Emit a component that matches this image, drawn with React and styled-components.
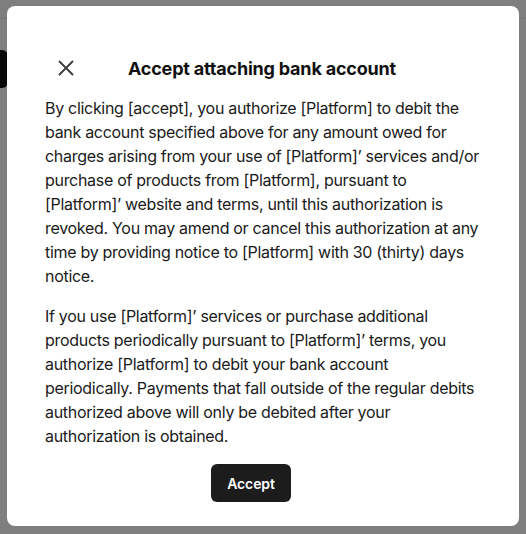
import React from "react";
import styled, { createGlobalStyle } from "styled-components";

const Global = createGlobalStyle`
  html, body { margin: 0; padding: 0; }
  body {
    font-family: Inter, "Noto Sans", sans-serif;
    background: #ffffff;
    width: 526px;
    height: 534px;
    overflow: hidden;
  }
`;

const Page = styled.div`
  position: relative;
  width: 526px;
  height: 534px;
  background: #ffffff;
  overflow: hidden;
`;

const TopBar = styled.div`
  height: 18px;
  border-bottom: 1px solid #efefef;
  background: #ffffff;
`;

const PageButton = styled.div`
  margin-top: 31px;
  margin-left: -30px;
  width: 38px;
  height: 38px;
  border-radius: 6px;
  background: #111111;
`;

const Overlay = styled.div`
  position: absolute;
  inset: 0;
  background: rgba(0, 0, 0, 0.5);
  display: flex;
  align-items: flex-start;
  justify-content: center;
  padding-top: 6px;
`;

const Dialog = styled.div`
  box-sizing: border-box;
  width: 512px;
  height: 520px;
  background: #ffffff;
  border-radius: 8px;
  padding: 46px 40px 24px 38px;
  display: flex;
  flex-direction: column;
`;

const Header = styled.div`
  display: grid;
  grid-template-columns: 1fr auto 1fr;
  align-items: center;
  height: 32px;
  margin-bottom: 12px;
`;

const CloseButton = styled.button`
  justify-self: start;
  margin-left: 7px;
  width: 28px;
  height: 28px;
  padding: 0;
  border: none;
  background: transparent;
  display: flex;
  align-items: center;
  justify-content: center;
  cursor: pointer;
`;

const Title = styled.h2`
  margin: 0;
  font-family: Inter, "Noto Sans", sans-serif;
  font-size: 18px;
  font-weight: 700;
  color: #111111;
  letter-spacing: -0.2px;
`;

const Body = styled.p`
  margin: 0 0 ${(p) => p.$gap}px;
  font-family: Inter, "Noto Sans", sans-serif;
  font-size: 16px;
  line-height: 24px;
  letter-spacing: -0.3px;
  white-space: nowrap;
  color: #1a1a1a;
`;

const Footer = styled.div`
  display: flex;
  justify-content: flex-start;
  padding-left: 166px;
`;

const AcceptButton = styled.button`
  width: 80px;
  height: 38px;
  border: none;
  border-radius: 6px;
  background: #1c1c1c;
  color: #ffffff;
  font-family: Inter, "Noto Sans", sans-serif;
  font-size: 14px;
  font-weight: 600;
  letter-spacing: -0.1px;
  cursor: pointer;
`;

const paragraphs = [
  [
    "By clicking [accept], you authorize [Platform] to debit the",
    "bank account specified above for any amount owed for",
    "charges arising from your use of [Platform]’ services and/or",
    "purchase of products from [Platform], pursuant to",
    "[Platform]’ website and terms, until this authorization is",
    "revoked. You may amend or cancel this authorization at any",
    "time by providing notice to [Platform] with 30 (thirty) days",
    "notice.",
  ],
  [
    "If you use [Platform]’ services or purchase additional",
    "products periodically pursuant to [Platform]’ terms, you",
    "authorize [Platform] to debit your bank account",
    "periodically. Payments that fall outside of the regular debits",
    "authorized above will only be debited after your",
    "authorization is obtained.",
  ],
];

export default function App() {
  return (
    <>
      <Global />
      <Page>
        <TopBar />
        <PageButton />
        <Overlay>
          <Dialog>
            <Header>
              <CloseButton aria-label="Close">
                <svg width="16" height="16" viewBox="0 0 16 16">
                  <path
                    d="M1.5 1.5 L14.5 14.5 M14.5 1.5 L1.5 14.5"
                    stroke="#3a3a3a"
                    strokeWidth="1.8"
                    strokeLinecap="round"
                  />
                </svg>
              </CloseButton>
              <Title>Accept attaching bank account</Title>
              <span />
            </Header>
            {paragraphs.map((lines, i) => (
              <Body key={i} $gap={16}>
                {lines.map((line, j) => (
                  <React.Fragment key={j}>
                    {line}
                    {j < lines.length - 1 && <br />}
                  </React.Fragment>
                ))}
              </Body>
            ))}
            <Footer>
              <AcceptButton>Accept</AcceptButton>
            </Footer>
          </Dialog>
        </Overlay>
      </Page>
    </>
  );
}
